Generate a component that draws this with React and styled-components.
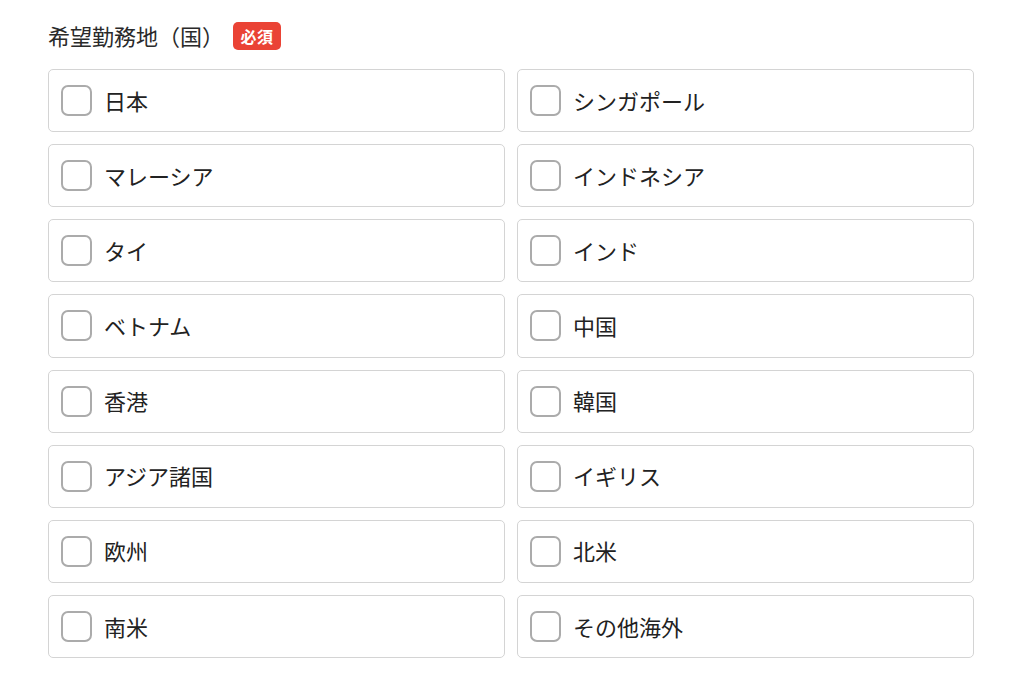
import React, { useState } from "react"
import styled, { createGlobalStyle } from "styled-components"

const GlobalStyle = createGlobalStyle`
  body {
    margin: 0;
    background: #fff;
    font-family: "Noto Sans CJK JP", "Noto Sans", sans-serif;
    color: #222;
  }
`

const Wrapper = styled.div`
  padding: 22px 0 0 48px;
  width: 926px;
`

const Header = styled.div`
  display: flex;
  align-items: center;
  gap: 9px;
  height: 28px;
  margin-bottom: 19px;
`

const Title = styled.h2`
  margin: 0;
  font-size: 22px;
  font-weight: 400;
  color: #2a2a2a;
  line-height: 28px;
  position: relative;
  top: -1px;
`

const Badge = styled.span`
  display: inline-flex;
  align-items: center;
  justify-content: center;
  width: 48px;
  height: 28px;
  border-radius: 5px;
  background: #ea4335;
  color: #fff;
  font-size: 16px;
  font-weight: 700;
  letter-spacing: 0.5px;
`

const Grid = styled.div`
  display: grid;
  grid-template-columns: 1fr 1fr;
  grid-auto-rows: 63.15px;
  column-gap: 12px;
  row-gap: 12px;
`

const Option = styled.label`
  display: flex;
  align-items: center;
  gap: 12px;
  box-sizing: border-box;
  padding: 0 12px;
  border: 1px solid #d4d4d4;
  border-radius: 5px;
  cursor: pointer;
`

const Box = styled.span`
  box-sizing: border-box;
  width: 31px;
  height: 31px;
  flex: none;
  border: 2px solid ${p => (p.checked ? "#ea4335" : "#ababab")};
  border-radius: 7px;
  background: #fff;
`

const Label = styled.span`
  font-size: 22px;
  line-height: 1;
  color: #222;
  position: relative;
  top: -1px;
`

const countries = [
  "日本", "シンガポール",
  "マレーシア", "インドネシア",
  "タイ", "インド",
  "ベトナム", "中国",
  "香港", "韓国",
  "アジア諸国", "イギリス",
  "欧州", "北米",
  "南米", "その他海外",
]

export default function App() {
  const [checked, setChecked] = useState({})

  return (
    <Wrapper>
      <GlobalStyle />
      <Header>
        <Title>希望勤務地（国）</Title>
        <Badge>必須</Badge>
      </Header>
      <Grid>
        {countries.map(name => (
          <Option key={name} onClick={() => setChecked(c => ({ ...c, [name]: !c[name] }))}>
            <Box checked={!!checked[name]} />
            <Label>{name}</Label>
          </Option>
        ))}
      </Grid>
    </Wrapper>
  )
}
